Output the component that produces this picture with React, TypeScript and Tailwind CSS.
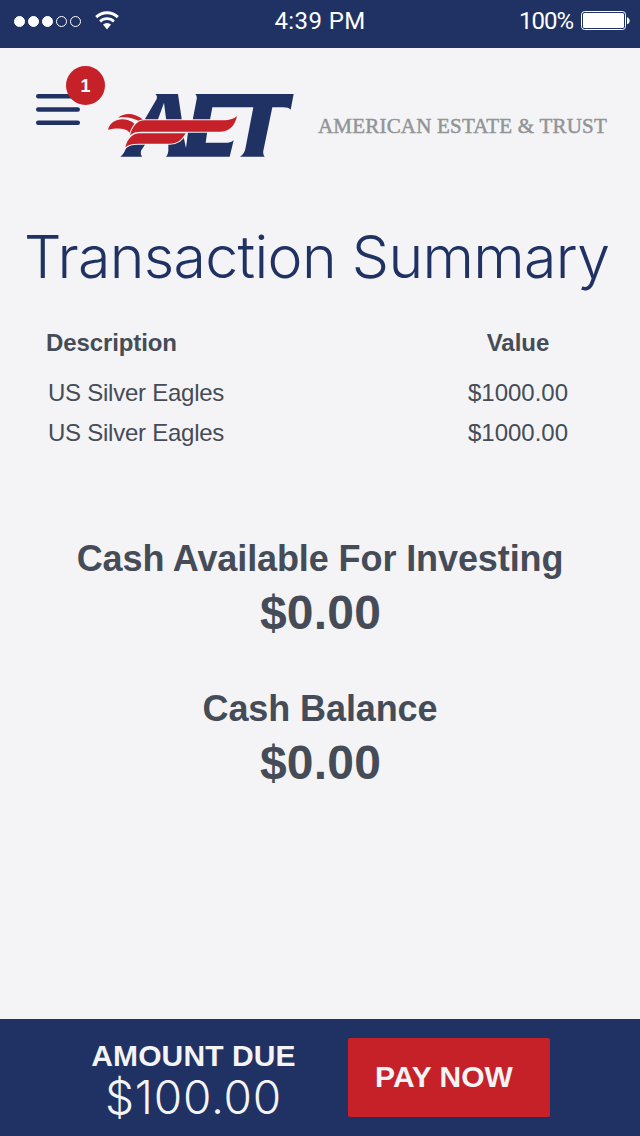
import { clsx } from "clsx";

const transactions = [
  { id: 1, description: "US Silver Eagles", value: "$1000.00" },
  { id: 2, description: "US Silver Eagles", value: "$1000.00" },
];

function StatusBar() {
  return (
    <div className="h-12 flex-none grid grid-cols-3 bg-[#1f3263] px-[10px] text-white font-['Roboto',sans-serif] text-2xl leading-[42px]">
      <div className="flex h-[42px] items-center">
        <div className="flex gap-[3px] pl-1">
          {[0, 1, 2, 3, 4].map((i) => (
            <span
              key={i}
              className={clsx("size-[11px] rounded-full border border-white", i < 3 && "bg-white")}
            />
          ))}
        </div>
        <svg className="ml-[14px] mt-[-2px]" width="24" height="19" viewBox="0 0 24 19" fill="none">
          <path d="M1.2 6.2a15.5 15.5 0 0 1 21.6 0" stroke="white" strokeWidth="3" />
          <path d="M5.1 10.4a10 10 0 0 1 13.8 0" stroke="white" strokeWidth="2.8" />
          <path d="M8 13.6a6 6 0 0 1 8 0L12 18.5z" fill="white" />
        </svg>
      </div>
      <div className="text-center tracking-[0.4px]">4:39 PM</div>
      <div className="flex h-[42px] items-center justify-end">
        <span className="tracking-[-1px]">100%</span>
        <svg className="ml-2" width="49" height="20" viewBox="0 0 49 20">
          <rect x="0.5" y="0.5" width="44" height="18" rx="3" fill="none" stroke="white" />
          <rect x="2" y="2" width="41" height="15" rx="1.5" fill="white" />
          <path d="M46 6.2c3.6 1 3.6 6 0 7z" fill="white" />
        </svg>
      </div>
    </div>
  );
}

function Logo() {
  return (
    <svg width="190" height="66" viewBox="21 39 570 198">
      <g fill="#1f3263">
        <path
          fillRule="evenodd"
          d="M166 42H234L246 124H131L170 57Q173 48 166 42ZM192 68L172 124H199Z"
        />
        <path d="M286 42H581L572 89Q565 82 550 82H517L490 212Q488 223 494 230H420Q433 222 436 207L460 82H337L328 130H276L290 58Q292 48 286 42Z" />
        <path d="M78 203L86 186H140L123 212Q120 223 126 230H61Q73 221 78 203Z" />
        <path d="M250 152H322L317 188H384Q396 187 401 181L389 230H198Q206 222 205 207V186H240L250 167L258 204L264 157Z" />
      </g>
      {/* feathers, each with a light keyline over the letters */}
      <g fill="#c62128" stroke="#f4f4f6" strokeWidth="7" paintOrder="stroke">
        <path d="M54 113C75 96 105 99 130 119L122 126C103 115 80 109 54 113Z" />
        <path d="M24 149C31 122 59 113 83 120Q98 124 104 132L89 158C79 145 55 142 24 149Z" />
        <path d="M76 202C83 177 96 160 119 160H257C244 182 231 191 209 191H114C98 191 86 193 76 202Z" />
        <path d="M90 166C97 140 111 121 134 121H360C383 121 399 119 411 108C404 140 386 155 360 155H124C108 155 98 158 90 166Z" />
      </g>
    </svg>
  );
}

function Header() {
  return (
    <header className="flex h-[172px] flex-none items-start pl-9 pt-[45px]">
      <button className="relative mt-px flex-none">
        <svg width="44" height="32" viewBox="0 0 44 32" fill="#1f3263">
          <rect y="0" width="44" height="4.5" rx="2.2" />
          <rect y="13.2" width="44" height="4.5" rx="2.2" />
          <rect y="26.4" width="44" height="4.5" rx="2.2" />
        </svg>
        <span className="absolute -top-7 left-[30px] flex size-[39px] items-center justify-center rounded-full bg-[#c62128] text-lg font-bold text-white">
          1
        </span>
      </button>
      <div className="ml-[27px] flex-none">
        <Logo />
      </div>
      <span className="ml-[21px] mt-[21px] whitespace-nowrap font-['Liberation_Serif',serif] text-[21px] leading-6 tracking-[0.2px] text-[#939496] [-webkit-text-stroke:0.5px_#939496]">
        AMERICAN ESTATE &amp; TRUST
      </span>
    </header>
  );
}

function Balance({ label, amount }: { label: string; amount: string }) {
  return (
    <div className="text-center font-bold">
      <h2 className="text-4xl leading-[48px] tracking-[-0.1px]">{label}</h2>
      <p className="pl-px text-5xl leading-[60px] tracking-[0.2px]">{amount}</p>
    </div>
  );
}

function Footer() {
  return (
    <footer className="flex h-[117px] flex-none bg-[#1f3263] pl-[91px] text-[#f4f4f6]">
      <div className="w-[205px] pt-[21px] text-center">
        <div className="whitespace-nowrap text-[30px] font-bold leading-8 tracking-[0.1px]">AMOUNT DUE</div>
        <div className="font-['Inter',sans-serif] text-[46px] font-light leading-[50px] tracking-[0.8px]">$100.00</div>
      </div>
      <button className="ml-[52px] mt-[19px] h-[79px] w-[202px] rounded-[2px] bg-[#c62128] pb-0.5 pr-[10px] text-[30px] font-bold">
        PAY NOW
      </button>
    </footer>
  );
}

export default function App() {
  return (
    <div className="flex h-[1136px] w-[640px] flex-col overflow-hidden bg-[#f4f4f6] font-['Liberation_Sans',Arial,sans-serif] text-[#454c57]">
      <StatusBar />
      <Header />
      <main className="flex-1">
        <h1 className="whitespace-nowrap pl-6 pt-px font-['Inter',sans-serif] text-[59px] font-light leading-[72px] tracking-[-0.68px] text-[#1f3263]">
          Transaction Summary
        </h1>
        <table className="mt-[29px] w-full text-2xl">
          <thead>
            <tr className="h-[42px] leading-[42px]">
              <th className="p-0 pl-[46px] text-left tracking-[-0.1px]">Description</th>
              <th className="w-[244px] p-0 text-center">Value</th>
            </tr>
          </thead>
          <tbody className="border-t-[9px] border-transparent">
            {transactions.map((t) => (
              <tr key={t.id} className="h-10 leading-10">
                <td className="p-0 pl-12 tracking-[-0.25px]">{t.description}</td>
                <td className="p-0 text-center">{t.value}</td>
              </tr>
            ))}
          </tbody>
        </table>
        <div className="mt-[82px] flex flex-col gap-[42px]">
          <Balance label="Cash Available For Investing" amount="$0.00" />
          <Balance label="Cash Balance" amount="$0.00" />
        </div>
      </main>
      <Footer />
    </div>
  );
}
